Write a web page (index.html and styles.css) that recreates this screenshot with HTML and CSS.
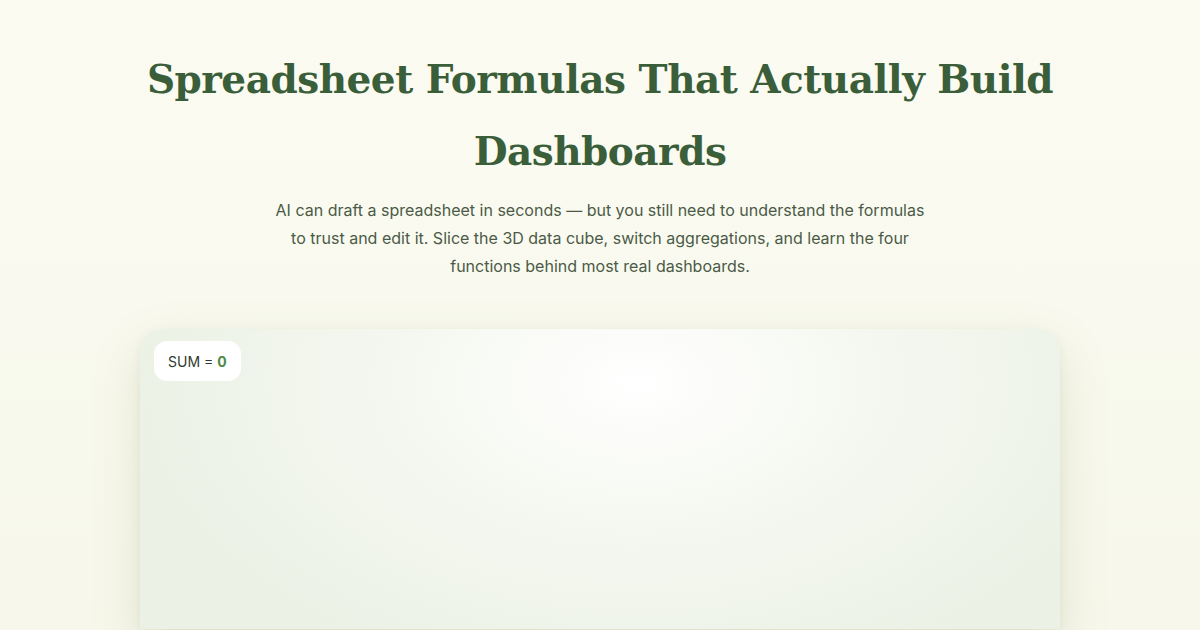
FILE: index.html
```html
<!DOCTYPE html>
<html>
<head>
<meta charset="utf-8">
<link rel="stylesheet" href="styles.css">
</head>
<body>
<header class="hero">
  <h1 class="title">Spreadsheet Formulas That Actually Build Dashboards</h1>
  <p class="lede">AI can draft a spreadsheet in seconds — but you still need to understand the formulas to trust and edit it. Slice the 3D data cube, switch aggregations, and learn the four functions behind most real dashboards.</p>
</header>
<main class="stage">
  <section class="cube-card">
    <div class="badge">SUM = <b class="badge-val">0</b></div>
  </section>
</main>
</body>
</html>
```
FILE: styles.css
```css
html, body {
  margin: 0;
  padding: 0;
}
body {
  width: 1200px;
  height: 630px;
  overflow: hidden;
  background: linear-gradient(180deg, #fbfbf2 0%, #f7f8eb 100%);
  font-family: Inter, "Noto Sans", sans-serif;
}
.hero {
  display: flex;
  flex-direction: column;
  align-items: center;
  padding-top: 43px;
}
.title {
  margin: 0;
  width: 960px;
  text-align: center;
  font-family: "DejaVu Serif", Georgia, serif;
  font-weight: 700;
  font-size: 39px;
  line-height: 72px;
  color: #3b5e3a;
  letter-spacing: -0.5px;
}
.lede {
  margin: 9px 0 0;
  width: 652px;
  text-align: center;
  font-size: 16px;
  line-height: 28px;
  color: #4b5a47;
}
.stage {
  display: flex;
  justify-content: center;
  padding-top: 49px;
}
.cube-card {
  width: 920px;
  height: 300px;
  border-radius: 22px 22px 0 0;
  background: radial-gradient(ellipse 520px 320px at 54% 18%, #ffffff 0%, #f4f7ef 50%, #ebf1e5 100%);
  box-shadow: 0 20px 50px rgba(120, 130, 80, 0.18), 0 2px 10px rgba(120, 130, 80, 0.08);
  padding: 12px 14px;
  box-sizing: border-box;
}
.badge {
  display: inline-flex;
  align-items: center;
  height: 40px;
  padding: 0 14px;
  background: #ffffff;
  border-radius: 13px;
  font-size: 14px;
  color: #2f3a2e;
  gap: 4px;
}
.badge-val {
  color: #4d8a4a;
  font-weight: 700;
}
```
